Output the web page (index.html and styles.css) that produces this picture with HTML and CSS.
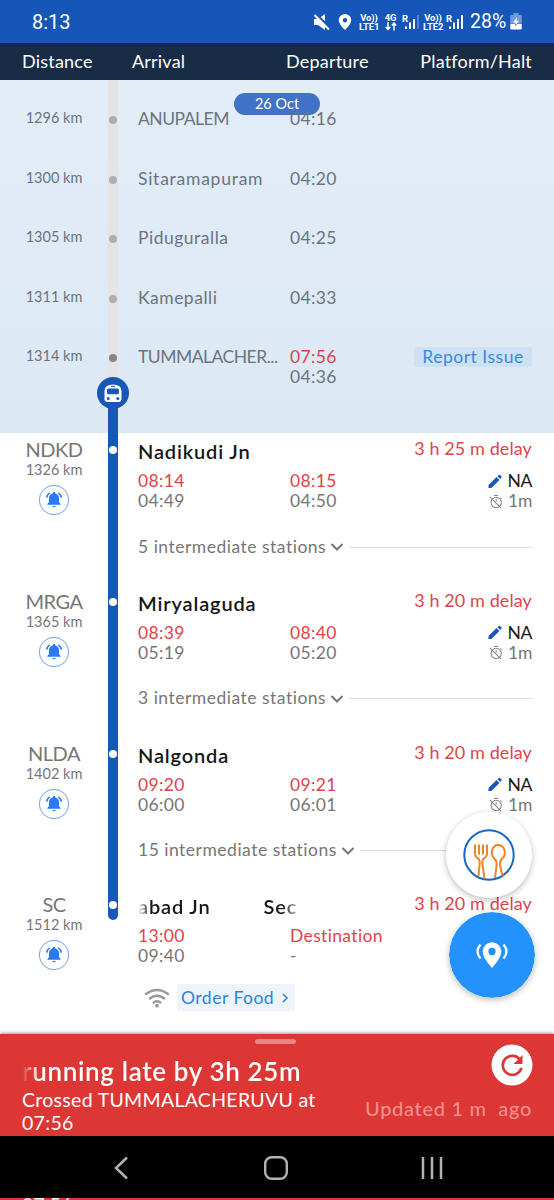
FILE: index.html
```html
<!DOCTYPE html>
<html lang="en">
<head>
<meta charset="utf-8">
<title>Train status</title>
<link rel="stylesheet" href="styles.css">
</head>
<body>
<svg class="defs" width="0" height="0">
  <symbol id="bell" viewBox="0 0 32 32">
    <circle cx="16" cy="16" r="14.7" fill="#fff" stroke="#6f9fe8" stroke-width="1"/>
    <path d="M16 8.100c-.9 0-1.400.6-1.400 1.400-2.400.6-3.700 2.400-3.700 4.900v3.900l-1.500 1.600v.9h13.200v-.9l-1.500-1.600v-3.900c0-2.500-1.300-4.300-3.700-4.900 0-.8-.5-1.400-1.400-1.400zM14.300 22h3.400q-.3 1.300-1.700 1.300T14.300 22z" fill="#2979f2"/>
    <path d="M11.700 8.800Q9 10.500 8.800 13.700M20.300 8.800q2.700 1.700 2.900 4.900" fill="none" stroke="#2979f2" stroke-width="1.500"/>
  </symbol>
  <symbol id="pencil" viewBox="0 0 14 14">
    <path d="M.5 10.600 8.600 2.600l2.800 2.800-8 8H.5zM9.500 1.700 10.700.6q.8-.6 1.500.1L13.300 1.800q.7.700 0 1.500l-1.100 1.200z" fill="#1857b8"/>
  </symbol>
  <symbol id="timer" viewBox="0 0 15 15">
    <g fill="none" stroke="#858585" stroke-width="1.100"><circle cx="7.700" cy="8.500" r="5.500"/><path d="M5.500 1h4.400M12.200 3.300l1.200 1.200M.8 2.500l12.300 12M7.700 5.200v2.500"/></g>
  </symbol>
  <symbol id="down" viewBox="0 0 14 10"><path d="M1.500 2 7 7.500 12.500 2" fill="none" stroke="#777" stroke-width="2"/></symbol>
</svg>

<header class="status">
  <span class="clock">8:13</span>
  <div class="indicators">
    <svg class="mute" width="16" height="18" viewBox="0 0 16 18"><path d="M0 6h4l7-5v16l-7-5H0z" fill="#fff"/><path d="M1.500 .500 16 15" stroke="#1556b8" stroke-width="2.500"/><path d="M.5 2 15 16.500" stroke="#fff" stroke-width="2"/></svg>
    <svg class="pin" width="14" height="18" viewBox="0 0 14 18"><path fill="#fff" fill-rule="evenodd" d="M7 1a6.200 6.200 0 0 0-6.200 6.200C.8 11.500 7 17 7 17s6.200-5.500 6.200-9.800A6.200 6.200 0 0 0 7 1zm0 4a2.200 2.200 0 1 1 0 4.400A2.200 2.200 0 0 1 7 5z"/></svg>
    <span class="volte"><b>Vo))</b><b>LTE1</b></span>
    <span class="net"><b>4G</b><svg width="12" height="9" viewBox="0 0 12 9"><path d="M3 0v7M.8 5 3 7.300 5.200 5M9 8.500V1.500M6.800 3.500 9 1.200l2.200 2.300" fill="none" stroke="#fff" stroke-width="1.500"/></svg></span>
    <span class="signal"><b>R</b><svg width="17" height="17" viewBox="0 0 17 17"><path d="M3 13.500h2V16H3zM7 9.500h2V16H7zM11 6h2v10h-2z" fill="#fff"/><path d="M15 2h2v14h-2z" fill="#4f82ce"/></svg></span>
    <span class="volte second"><b>Vo))</b><b>LTE2</b></span>
    <span class="signal"><b>R</b><svg width="17" height="17" viewBox="0 0 17 17"><path d="M3 13.500h2V16H3zM7 9.500h2V16H7zM11 6h2v10h-2zM15 2h2v14h-2z" fill="#fff"/></svg></span>
    <span class="percent">28%</span>
    <svg class="battery" width="12" height="17" viewBox="0 0 12 17"><path d="M3.500 0h5v2H11q.7 0 .7.800v8H.3v-8Q.3 2 1 2h2.500z" fill="#6f9bdd"/><path d="M.3 11h11.400v4.500q0 1-1 1H1.300q-1 0-1-1z" fill="#fff"/><path d="M7 4 3 9.500h2.500L5 13l4-5.300H6.500z" fill="#fff"/><path d="M5.500 11 5 13.500 7 11z" fill="#1556b8"/></svg>
  </div>
</header>

<div class="columns">
  <span class="c-distance">Distance</span><span class="c-arrival">Arrival</span><span class="c-departure">Departure</span><span class="c-platform">Platform/Halt</span>
</div>

<main>
  <section class="past">
    <div class="date">26 Oct</div>
    <div class="row first"><span class="km">1296 km</span><i class="track"></i><span class="stop caps">ANUPALEM</span><span class="dep">04:16</span></div>
    <div class="row"><span class="km">1300 km</span><i class="track"></i><span class="stop wide">Sitaramapuram</span><span class="dep">04:20</span></div>
    <div class="row"><span class="km">1305 km</span><i class="track"></i><span class="stop">Piduguralla</span><span class="dep">04:25</span></div>
    <div class="row"><span class="km">1311 km</span><i class="track"></i><span class="stop">Kamepalli</span><span class="dep">04:33</span></div>
    <div class="row current"><span class="km">1314 km</span><i class="track"></i><span class="stop caps">TUMMALACHER...</span><span class="dep"><em>07:56</em>04:36</span><a class="report">Report Issue</a>
      <svg class="train" width="32" height="32" viewBox="0 0 32 32"><circle cx="16" cy="16" r="16" fill="#1657b8"/><path d="M7.500 14q0-6.500 8.500-6.500t8.500 6.500v8q0 3-3 3h-11q-3 0-3-3z" fill="#fff"/><path d="M14 8.800h4v1h-4z" fill="#1657b8"/><rect x="10" y="11.500" width="12" height="5.700" rx="1.500" fill="#1657b8"/><circle cx="11.200" cy="21.500" r="1.500" fill="#1657b8"/><circle cx="20.800" cy="21.500" r="1.500" fill="#1657b8"/></svg>
    </div>
  </section>

  <section class="stations">
    <article class="station">
      <div class="left"><span class="code">NDKD</span><span class="dist">1326 km</span><svg class="bell"><use href="#bell"/></svg></div>
      <i class="track"></i>
      <div class="info">
        <div class="title"><h2>Nadikudi Jn</h2><span class="delay">3 h 25 m delay</span></div>
        <div class="times"><span><em>08:14</em>04:49</span><span><em>08:15</em>04:50</span><div class="halt"><span class="na"><svg><use href="#pencil"/></svg>NA</span><span><svg><use href="#timer"/></svg>1m</span></div></div>
        <div class="between"><span>5 intermediate stations</span><svg><use href="#down"/></svg><hr></div>
      </div>
    </article>
    <article class="station">
      <div class="left"><span class="code">MRGA</span><span class="dist">1365 km</span><svg class="bell"><use href="#bell"/></svg></div>
      <i class="track"></i>
      <div class="info">
        <div class="title"><h2>Miryalaguda</h2><span class="delay">3 h 20 m delay</span></div>
        <div class="times"><span><em>08:39</em>05:19</span><span><em>08:40</em>05:20</span><div class="halt"><span class="na"><svg><use href="#pencil"/></svg>NA</span><span><svg><use href="#timer"/></svg>1m</span></div></div>
        <div class="between"><span>3 intermediate stations</span><svg><use href="#down"/></svg><hr></div>
      </div>
    </article>
    <article class="station">
      <div class="left"><span class="code">NLDA</span><span class="dist">1402 km</span><svg class="bell"><use href="#bell"/></svg></div>
      <i class="track"></i>
      <div class="info">
        <div class="title"><h2>Nalgonda</h2><span class="delay">3 h 20 m delay</span></div>
        <div class="times"><span><em>09:20</em>06:00</span><span><em>09:21</em>06:01</span><div class="halt"><span class="na"><svg><use href="#pencil"/></svg>NA</span><span><svg><use href="#timer"/></svg>1m</span></div></div>
        <div class="between"><span>15 intermediate stations</span><svg><use href="#down"/></svg><hr></div>
      </div>
    </article>
    <article class="station last">
      <div class="left"><span class="code">SC</span><span class="dist">1512 km</span><svg class="bell"><use href="#bell"/></svg></div>
      <i class="track"></i>
      <div class="info">
        <div class="title"><h2 class="marquee"><span>abad Jn</span><span>Sec</span></h2><span class="delay">3 h 20 m delay</span></div>
        <div class="times"><span><em>13:00</em>09:40</span><span><em>Destination</em>-</span></div>
        <div class="services"><svg width="26" height="20" viewBox="0 0 26 20"><g fill="none" stroke="#999" stroke-width="2.400"><path d="M1.200 6.500q11.800-9 23.600 0M5 11q8-6.300 16 0M8.900 15q4.100-3.300 8.200 0"/></g><circle cx="13" cy="17.700" r="1.900" fill="#999"/></svg><a class="order">Order Food <svg width="8" height="10" viewBox="0 0 8 10"><path d="M2 1l4 4-4 4" fill="none" stroke="#2d83c9" stroke-width="1.500"/></svg></a></div>
      </div>
    </article>
  </section>
  <svg class="food" width="86" height="86" viewBox="0 0 86 86"><circle cx="43" cy="43" r="43" fill="#fff"/><circle cx="43" cy="43" r="24.700" fill="#fff" stroke="#1667c0" stroke-width="2"/><g fill="none" stroke="#ee8424" stroke-width="2"><path d="M29 32.500v9q0 3 2.500 4.500 2.500 1.500 2.200 5.500L32.500 64M41 32.500v9q0 3-2.500 4.500-2.500 1.500-2.200 5.500L38.500 66.500M33 32.500v10M37 32.500v10"/><path d="M49 66 50.600 53q.5-4-2.300-6.500c-5-4.500-2-13.500 4-13.500s9 9 4 13.500Q53.500 49 54 53L56.500 64"/></g></svg>
  <svg class="locate" width="86" height="86" viewBox="0 0 86 86"><circle cx="43" cy="43" r="43" fill="#2492fd"/><path fill="#fff" fill-rule="evenodd" d="M43 30.300a9.300 9.300 0 0 0-9.300 9.300C33.700 46.500 43 56 43 56s9.300-9.500 9.300-16.400a9.300 9.300 0 0 0-9.300-9.300zm0 5.500a3.600 3.600 0 1 1 0 7.200 3.600 3.600 0 0 1 0-7.200z"/><path d="M31.500 32.500q-6 6.800 0 14M54.500 32.500q6 6.800 0 14" fill="none" stroke="#fff" stroke-width="2.200"/></svg>
</main>

<section class="alert">
  <div class="message"><i class="grip"></i><h1>running late by 3h 25m</h1><p>Crossed TUMMALACHERUVU at</p><p class="time">07:56</p></div>
  <div class="update"><svg width="42" height="42" viewBox="0 0 42 42"><circle cx="21" cy="21" r="20.500" fill="#fff"/><path d="M29.500 16.500a9.500 9.500 0 1 0 .9 7.500" fill="none" stroke="#dc3734" stroke-width="2.700"/><path d="M31.500 11v9h-9z" fill="#dc3734"/></svg><span>Updated 1 m&nbsp; ago</span></div>
</section>
<nav class="system">
  <svg width="16" height="24" viewBox="0 0 16 24"><path d="M13 1.500 2 12l11 10.500" fill="none" stroke="#b2b2b2" stroke-width="2.500"/></svg>
  <svg width="24" height="24" viewBox="0 0 24 24"><rect x="1.200" y="1.200" width="21.600" height="21.600" rx="6.500" fill="none" stroke="#b2b2b2" stroke-width="2.400"/></svg>
  <svg width="24" height="24" viewBox="0 0 24 24"><path d="M3 1v22M12 1v22M21 1v22" stroke="#b2b2b2" stroke-width="2.500"/></svg>
</nav>
<div class="edge">07:56</div>
</body>
</html>
```

FILE: styles.css
```css
* { box-sizing: border-box; }
body { margin: 0; width: 554px; height: 1200px; overflow: hidden; background: #fff; font-family: Lato, "Open Sans", sans-serif; color: #767676; font-variant-ligatures: none; }
svg { display: block; flex: none; }
em { font-style: normal; color: #df434a; display: block; }
h1, h2, p { margin: 0; }
.defs { position: absolute; }
.status { height: 43px; background: #1556b8; color: #fff; display: flex; justify-content: space-between; align-items: center; padding: 0 32px 0 32px; font-family: Roboto, sans-serif; }
.clock { font-size: 20px; }
.indicators { display: flex; align-items: center; }
.indicators b { font-weight: 700; font-size: 9.500px; line-height: 9px; display: block; letter-spacing: -.1px; }
.mute { margin-right: 8px; }
.pin { margin-right: 7px; }
.volte { width: 20px; text-align: center; }
.net { width: 13px; margin: 0 5px; display: flex; flex-direction: column; align-items: center; }
.signal { width: 17px; position: relative; }
.signal b { position: absolute; left: 0; top: 0; }
.signal svg { margin-top: -1px; }
.second { margin: 0 3px 0 4px; }
.percent { font-size: 19.500px; width: 38px; margin-left: 7px; }
.battery { margin-left: 2px; }
.columns { height: 37px; background: #182c45; color: #fff; font-size: 18px; line-height: 36px; display: grid; grid-template-columns: 110px 154px 120px 1fr; padding: 0 22px; letter-spacing: .2px; }
.c-platform { text-align: right; }
.columns span { white-space: nowrap; }
main { position: relative; height: 954px; }
.past { height: 353px; background: linear-gradient(#e3edf8, #dce8f4); color: #6a747f; position: relative; }
.date { position: absolute; z-index: 1; left: 234px; top: 13px; width: 86px; height: 22px; border-radius: 11px; background: #4172c8; color: #fff; font-size: 14.500px; line-height: 22px; text-align: center; }
.row { --top: 8px; display: grid; grid-template-columns: 108px 10px 20px 152px 110px 1fr; height: 59.500px; position: relative; font-size: 17.500px; line-height: 20px; }
.row > * { padding-top: var(--top); grid-row: 1; }
.row.first { --top: 28px; height: 79.500px; }
.row.first .dep { z-index: 2; }
.row.current { height: 95px; }
.km { font-size: 14.500px; text-align: center; }
.row .track { background: #e5e3e4; }
.track::after { content: ""; display: block; width: 8px; height: 8px; margin: 8px 1px; border-radius: 50%; background: #aeaeae; }
.row.current .track { background: linear-gradient(#e5e3e4 55px, #1657b8 55px); }
.current .track::after { background: #858585; }
.row .stop { grid-column: 4; white-space: nowrap; letter-spacing: .5px; padding-top: calc(var(--top) + 1px); }
.row .stop.caps { letter-spacing: -.5px; }
.row .stop.wide { letter-spacing: .75px; }
.row .dep { grid-column: 5; letter-spacing: .35px; padding-top: calc(var(--top) + 1px); }
.row .report { margin: 9px 22px 0 0; padding: 0; width: 118px; height: 20px; justify-self: end; grid-column: 5 / 7; background: #cee0f4; color: #348be4; text-align: center; border-radius: 2px; letter-spacing: .5px; }
.row .train { position: absolute; left: 97px; top: 39px; padding: 0; }
.station { display: grid; grid-template-columns: 108px 10px 1fr; height: 151.800px; }
.left { display: flex; flex-direction: column; align-items: center; padding-top: 5px; }
.code { font-size: 20px; line-height: 23px; letter-spacing: -.5px; }
.dist { font-size: 14.500px; line-height: 18px; }
.bell { width: 32px; height: 32px; margin-top: 5px; }
.station .track { background: #1657b8; padding-top: 5px; }
.station .track::after { background: #fff; }
.info { padding: 4px 22px 0 20px; }
.title { display: flex; justify-content: space-between; line-height: 22px; height: 34px; }
h2 { font-size: 20px; font-weight: 600; color: #161616; padding-top: 3px; letter-spacing: .85px; }
.delay { color: #df434a; font-size: 18px; white-space: nowrap; letter-spacing: .1px; }
.times { display: grid; grid-template-columns: 152px 110px 1fr; font-size: 17.500px; line-height: 20px; letter-spacing: .35px; }
.halt span { display: flex; justify-content: flex-end; align-items: center; gap: 5px; letter-spacing: -.3px; }
.halt svg { width: 14px; height: 15px; }
.na { color: #161616; }
.between { display: flex; align-items: center; margin-top: 24px; height: 22px; font-size: 17.500px; white-space: nowrap; letter-spacing: .5px; }
.between svg { width: 14px; height: 10px; margin: 2px 5px 0 4px; }
.between hr { flex: 1; border: 0; height: 1px; background: #dedede; margin: 2px 0 0; }
.last .track { height: 32px; border-radius: 0 0 5px 5px; }
.marquee { display: flex; gap: 53px; width: 160px; -webkit-mask-image: linear-gradient(90deg, transparent, #000 12px, #000 144px, transparent 166px); mask-image: linear-gradient(90deg, transparent, #000 12px, #000 144px, transparent 166px); }
.services { display: flex; align-items: center; gap: 7px; padding: 18px 0 0 6px; }
.order { display: flex; align-items: center; gap: 7px; width: 118px; height: 27px; padding-left: 4px; background: #edf4fc; color: #2c85dd; font-size: 17.500px; white-space: nowrap; letter-spacing: .5px; }
.food { position: absolute; left: 446px; top: 732px; border-radius: 50%; box-shadow: 0 2px 6px #0004; }
.locate { position: absolute; left: 449px; top: 832px; border-radius: 50%; box-shadow: 0 2px 6px #0004; }
.alert { position: relative; height: 102px; background: #dc3734; color: #fff; display: flex; justify-content: space-between; padding: 0 22px; box-shadow: 0 -1px 3px #0006; }
.message { padding-top: 21px; white-space: nowrap; }
.grip { position: absolute; left: 255px; top: 5px; width: 41px; height: 5px; border-radius: 3px; background: #eb8583; }
h1 { font-size: 26px; line-height: 33px; font-weight: 600; letter-spacing: .65px; -webkit-mask-image: linear-gradient(90deg, transparent, #000 17px); mask-image: linear-gradient(90deg, transparent, #000 17px); }
.message p { font-size: 19.500px; line-height: 23px; letter-spacing: .3px; }
.update { display: flex; flex-direction: column; align-items: flex-end; padding-top: 10px; font-size: 20px; font-weight: 500; letter-spacing: .7px; color: #f1908e; white-space: nowrap; }
.update span { line-height: 24px; margin-top: 10px; }
.update svg { margin-right: -1px; }
.system { height: 62px; background: #000; display: grid; grid-template-columns: 16px 24px 24px; column-gap: 134px; padding-left: 114px; align-items: center; padding-top: 1px; }
.system svg:last-child { margin-left: -2px; }
.edge { height: 2px; overflow: hidden; background: #dc3734; color: #fff; font-size: 19.500px; line-height: 14px; padding-left: 22px; }
```
